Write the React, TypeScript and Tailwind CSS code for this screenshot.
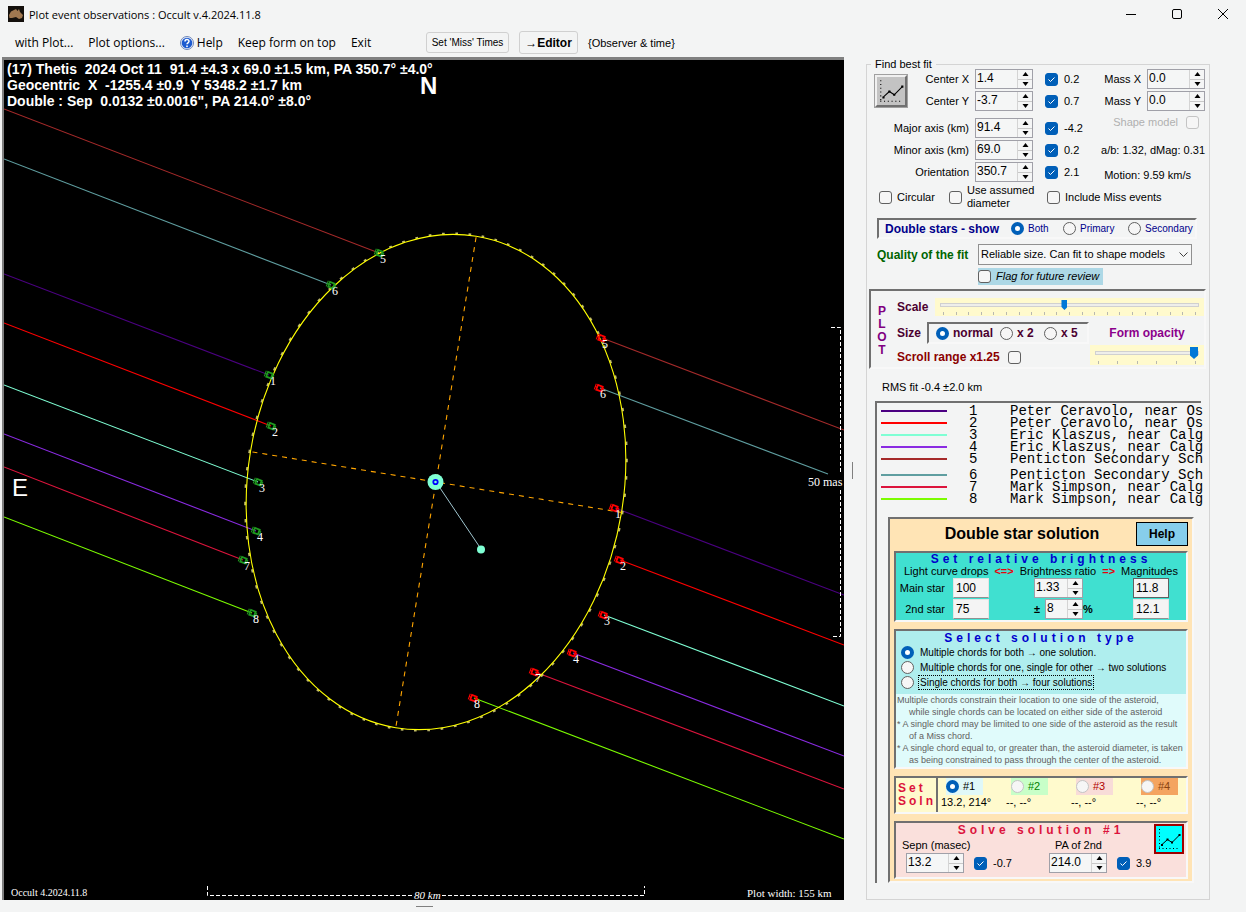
import type { ReactNode } from "react";
import clsx from "clsx";

interface Chord {
  id: number;
  observer: string;
  color: string;
  left: [number, number, number];
  right: [number, number, number, number];
}

// left: y at the plot edge, then the D event. right: the R event, then the far end.
const CHORDS: Chord[] = [
  { id: 1, observer: "Peter Ceravolo, near Os", color: "#4b0082", left: [274, 269, 375], right: [615, 508, 844, 595] },
  { id: 2, observer: "Peter Ceravolo, near Os", color: "#ff0000", left: [323, 271, 426], right: [620, 560, 844, 645] },
  { id: 3, observer: "Eric Klaszus, near Calg", color: "#7fffd4", left: [385, 258, 482], right: [604, 615, 844, 706] },
  { id: 4, observer: "Eric Klaszus, near Calg", color: "#8a2be2", left: [434, 256, 531], right: [573, 653, 844, 756] },
  { id: 5, observer: "Penticton Secondary Sch", color: "#a52a2a", left: [109, 379, 253], right: [602, 338, 844, 430] },
  { id: 6, observer: "Penticton Secondary Sch", color: "#5f9ea0", left: [159, 331, 285], right: [600, 388, 828, 474] },
  { id: 7, observer: "Mark Simpson, near Calg", color: "#dc143c", left: [467, 243, 560], right: [535, 672, 844, 789] },
  { id: 8, observer: "Mark Simpson, near Calg", color: "#7cfc00", left: [517, 252, 613], right: [474, 698, 844, 839] },
];

const CENTER = { x: 436, y: 482 };
const TILT = 9.3;

function ellipsePoint(deg: number, a: number, b: number) {
  const t = (deg * Math.PI) / 180;
  return [b * Math.cos(t), a * Math.sin(t)];
}

function EventMarker({ x, y, id, color }: { x: number; y: number; id: number; color: string }) {
  return (
    <g>
      <g transform={`translate(${x} ${y}) rotate(21)`} stroke={color} fill="none">
        <rect x="-2" y="-2.5" width="5" height="5" strokeWidth="1.8" />
        <path d="M-4 -3V3M-4 0H-2M4.5 -2V3" />
      </g>
      <text x={x + 1} y={y + 10} fill="#fff" fontSize="12" fontFamily="Liberation Serif, serif">
        {id}
      </text>
    </g>
  );
}

function Plot() {
  return (
    <svg viewBox="4 60 840 840" className="block w-full bg-black">
      {CHORDS.map((c) => (
        <g key={c.id} stroke={c.color} strokeWidth="1.1">
          <line x1="4" y1={c.left[0]} x2={c.left[1]} y2={c.left[2]} />
          <line x1={c.right[0]} y1={c.right[1]} x2={c.right[2]} y2={c.right[3]} />
        </g>
      ))}

      {/* Fitted ellipse with its axes */}
      <g transform={`translate(${CENTER.x} ${CENTER.y}) rotate(${TILT})`} fill="none">
        {Array.from({ length: 90 }, (_, i) => {
          const [x1, y1] = ellipsePoint(i * 4 - 0.4, 250, 189);
          const [x2, y2] = ellipsePoint(i * 4 + 0.4, 250, 189);
          return <line key={i} x1={x1} y1={y1} x2={x2} y2={y2} stroke="#bdb76b" strokeWidth="2" />;
        })}
        <ellipse rx="188" ry="249" stroke="#ffff00" strokeWidth="1.1" />
        <path d="M0 -248V248M-186 0H188" stroke="#ffa500" strokeDasharray="5 5" strokeWidth="1.1" />
      </g>

      {CHORDS.map((c) => (
        <g key={c.id}>
          <EventMarker x={c.left[1]} y={c.left[2]} id={c.id} color="#1f9a1f" />
          <EventMarker x={c.right[0] - 1} y={c.right[1]} id={c.id} color="#ff0000" />
        </g>
      ))}

      {/* The two stars */}
      <line x1="436" y1="482" x2="481" y2="549" stroke="#9fc5cf" />
      <circle cx="435.5" cy="482" r="8" fill="#7fffd4" />
      <circle cx="435.5" cy="482" r="2.2" fill="#7fffd4" stroke="#0000ff" strokeWidth="1.8" />
      <circle cx="481" cy="549.5" r="4" fill="#7fffd4" />

      {/* Scale bars */}
      <g stroke="#fff" strokeDasharray="4 2" fill="none">
        <path d="M831 327.5H840.5V474" />
        <path d="M840.5 490V636.5H831" />
        <path d="M207.5 886V895.5H412" />
        <path d="M442 895.5H644.5V886" />
      </g>
      <g fill="#fff" fontFamily="Liberation Serif, serif">
        <text x="808" y="486" fontSize="12">50 mas</text>
        <text x="414" y="899" fontSize="11" fontStyle="italic">80 km</text>
        <text x="11" y="896" fontSize="10">Occult 4.2024.11.8</text>
        <text x="747" y="897" fontSize="11">Plot width: 155 km</text>
      </g>

      <g fill="#fff" fontFamily="Liberation Sans, sans-serif" fontWeight="bold" fontSize="14">
        <text x="7" y="74" className="whitespace-pre">{"(17) Thetis  2024 Oct 11  91.4 ±4.3 x 69.0 ±1.5 km, PA 350.7° ±4.0°"}</text>
        <text x="7" y="90" className="whitespace-pre">{"Geocentric  X  -1255.4 ±0.9  Y 5348.2 ±1.7 km"}</text>
        <text x="7" y="106" className="whitespace-pre">{"Double : Sep  0.0132 ±0.0016\", PA 214.0° ±8.0°"}</text>
        <text x="420" y="94" fontSize="24">N</text>
        <text x="12" y="496" fontSize="24" fontWeight="normal">E</text>
      </g>
    </svg>
  );
}

function CheckBox({ label, checked, disabled }: { label: string; checked?: boolean; disabled?: boolean }) {
  return (
    <span className="grid size-[13px] shrink-0">
      <input
        type="checkbox"
        aria-label={label}
        defaultChecked={checked}
        disabled={disabled}
        className="peer col-start-1 row-start-1 size-[13px] appearance-none rounded-[3px] border border-[#606060] bg-[#f6f6f6] checked:border-[#005fb8] checked:bg-[#005fb8] disabled:border-[#c4c4c4]"
      />
      <svg viewBox="0 0 13 13" className="pointer-events-none invisible col-start-1 row-start-1 peer-checked:visible">
        <path d="M3.5 6.5 5.5 8.5 9.5 4.5" fill="none" stroke="#fff" />
      </svg>
    </span>
  );
}

function LabeledCheck({ label, children, className }: { label: string; children?: ReactNode; className?: string }) {
  return (
    <label className={clsx("flex items-center gap-[5px]", className)}>
      <CheckBox label={label} />
      <span>{children ?? label}</span>
    </label>
  );
}

interface RadioProps {
  name: string;
  label: string;
  checked?: boolean;
  disabled?: boolean;
  className?: string;
  labelClass?: string;
}

function Radio({ name, label, checked, disabled, className, labelClass }: RadioProps) {
  return (
    <label className={clsx("flex items-center gap-1 whitespace-nowrap", className)}>
      <input
        type="radio"
        name={name}
        defaultChecked={checked}
        disabled={disabled}
        className="size-[13px] shrink-0 appearance-none rounded-full border border-[#606060] bg-[#f6f6f6] checked:border-4 checked:border-[#005fb8] checked:bg-white disabled:border-[#c4c4c4]"
      />
      <span className={labelClass}>{label}</span>
    </label>
  );
}

function Spinner({ label, value, className }: { label: string; value: string; className?: string }) {
  return (
    <span className={clsx("flex h-5 shrink-0 border border-[#a0a0a8] bg-[#f5f6f6] text-black", className ?? "w-[58px]")}>
      <input aria-label={label} defaultValue={value} className="min-w-0 flex-1 bg-transparent pb-0.5 pl-px text-[12px] outline-none" />
      <span className="flex w-[15px] flex-col divide-y divide-[#c8c8c8] border-l border-[#d4d4d4]">
        <button aria-label={`${label} up`} className="grid flex-1 place-items-center">
          <svg viewBox="0 0 7 4" className="w-[7px]"><path d="M.5 4 3.5 0 6.5 4z" /></svg>
        </button>
        <button aria-label={`${label} down`} className="grid flex-1 place-items-center">
          <svg viewBox="0 0 7 4" className="w-[7px]"><path d="M.5 0H6.5L3.5 4z" /></svg>
        </button>
      </span>
    </span>
  );
}

function FitRow({ label, value, change }: { label: string; value: string; change: string }) {
  return (
    <div className="flex items-center">
      <span className="flex-1 pr-1.5 text-right">{label}</span>
      <Spinner label={label} value={value} />
      <span className="w-3" />
      <CheckBox label={`Fit ${label}`} checked />
      <span className="w-8 pl-1.5 whitespace-nowrap">{change}</span>
    </div>
  );
}

function FitIcon() {
  return (
    <svg viewBox="0 0 26 26" className="size-full" fill="none" stroke="#000">
      <path d="M3.5 3V24M3 22.5H24" strokeDasharray="1 2.5" />
      <path d="M6 18.5 11.5 13.5 16 16.5 23.5 9" />
      <path d="M5 18h2v2H5zM10.5 12.5h2v2h-2zM15 15.5h2v2h-2zM22.5 8h2v2h-2z" fill="#000" stroke="none" />
    </svg>
  );
}

function Ticks({ count }: { count: number }) {
  return (
    <span className="flex justify-between px-[3px]">
      {Array.from({ length: count }, (_, i) => (
        <span key={i} className="h-[3px] w-px bg-[#b8b8b0]" />
      ))}
    </span>
  );
}

function Slider({ label, value, ticks, small }: { label: string; value: number; ticks: number; small?: boolean }) {
  return (
    <div className="flex flex-col bg-[#fffacd] px-[5px] pt-0.5 pb-px">
      <input
        type="range"
        aria-label={label}
        defaultValue={value}
        className={clsx(
          "w-full appearance-none bg-transparent [&::-webkit-slider-runnable-track]:h-1 [&::-webkit-slider-runnable-track]:border [&::-webkit-slider-runnable-track]:border-[#d0d0d0] [&::-webkit-slider-runnable-track]:bg-[#eeeeea] [&::-webkit-slider-thumb]:appearance-none [&::-webkit-slider-thumb]:bg-[#0078d7] [&::-webkit-slider-thumb]:[clip-path:polygon(0_0,100%_0,100%_70%,50%_100%,0_70%)]",
          small
            ? "h-3 [&::-webkit-slider-thumb]:-mt-[5px] [&::-webkit-slider-thumb]:h-3 [&::-webkit-slider-thumb]:w-2"
            : "h-2.5 [&::-webkit-slider-thumb]:-mt-1 [&::-webkit-slider-thumb]:h-2.5 [&::-webkit-slider-thumb]:w-1.5",
        )}
      />
      <span className="h-0.5" />
      <Ticks count={ticks} />
    </div>
  );
}

// Win32 style sunken panel
function Sunken({ className, children }: { className?: string; children: ReactNode }) {
  return (
    <div className={clsx("border-2 border-t-[#707070] border-r-[#f8f8f8] border-b-[#f8f8f8] border-l-[#707070]", className)}>
      {children}
    </div>
  );
}

function HelpIcon() {
  return (
    <svg viewBox="0 0 14 14" className="size-3.5">
      <circle cx="7" cy="7" r="6.5" fill="#e8eefc" stroke="#6f87b8" />
      <circle cx="7" cy="7" r="5.3" fill="#1d5bd0" />
      <path d="M5 5.5C5 3 9 3 9 5.3 9 6.8 7 6.8 7 8.3" fill="none" stroke="#fff" strokeWidth="1.5" />
      <rect x="6.2" y="9.5" width="1.6" height="1.6" fill="#fff" />
    </svg>
  );
}

function TitleBar() {
  return (
    <header className="flex h-7 items-center pl-2 font-['Open_Sans','Noto_Sans',sans-serif]">
      <svg viewBox="0 0 16 16" className="mr-[5px] size-4">
        <rect width="16" height="16" fill="#14100c" />
        <path d="M1 9 3 5.5 6 4 8 3 9.5 5 11 3 12 6 15 9 14 12 11 13 8 11 4 12 1.5 12z" fill="#a07850" />
      </svg>
      <h1>Plot event observations : Occult v.4.2024.11.8</h1>
      <div className="ml-auto flex">
        {[
          ["Minimize", "M1 6.5H11"],
          ["Maximize", "M1.5 3Q1.5 1.5 3 1.5H9Q10.5 1.5 10.5 3V9Q10.5 10.5 9 10.5H3Q1.5 10.5 1.5 9Z"],
          ["Close", "M1 1 11 11M11 1 1 11"],
        ].map(([name, d]) => (
          <button key={name} aria-label={name} className="grid h-7 w-[46px] place-items-center">
            <svg viewBox="0 0 12 12" className="size-3" fill="none" stroke="#000"><path d={d} /></svg>
          </button>
        ))}
      </div>
    </header>
  );
}

function MenuBar() {
  return (
    <nav className="flex h-[29px] items-center pl-[15px]">
      <div className="flex w-[411px] items-center gap-[15px] font-['Open_Sans','Noto_Sans',sans-serif] text-xs whitespace-nowrap">
        <button>with Plot...</button>
        <button>Plot options...</button>
        <button className="flex items-center gap-[3px]"><HelpIcon />Help</button>
        <button>Keep form on top</button>
        <button>Exit</button>
      </div>
      <button className="h-[21px] w-[83px] rounded-[3px] border border-[#d0d0d0] text-[10px] whitespace-nowrap">Set 'Miss' Times</button>
      <button className="ml-2.5 h-[23px] w-[59px] rounded-[3px] border border-[#d0d0d0] text-xs font-bold whitespace-nowrap">→Editor</button>
      <span className="ml-2.5 pt-0.5">{"{Observer & time}"}</span>
    </nav>
  );
}

function FindBestFit() {
  return (
    <>
      <div className="flex pl-2">
        <div className="flex w-[215px] flex-col gap-[7px]">
          <div className="flex">
            <button aria-label="Fit" className="mt-1.5 size-8 shrink-0 border-2 border-t-[#f0f0f0] border-r-[#707070] border-b-[#707070] border-l-[#f0f0f0] bg-[#c3c3c3] outline outline-[#a0a0a0]">
              <FitIcon />
            </button>
            <div className="flex flex-1 flex-col gap-0.5">
              <FitRow label="Center X" value="1.4" change="0.2" />
              <FitRow label="Center Y" value="-3.7" change="0.7" />
            </div>
          </div>
          <div className="flex flex-col gap-0.5">
            <FitRow label="Major axis (km)" value="91.4" change="-4.2" />
            <FitRow label="Minor axis (km)" value="69.0" change="0.2" />
            <FitRow label="Orientation" value="350.7" change="2.1" />
          </div>
        </div>
        <div className="flex flex-1 flex-col items-end gap-0.5 pr-1">
          {["Mass X", "Mass Y"].map((m) => (
            <div key={m} className="flex items-center gap-1.5">
              <span>{m}</span>
              <Spinner label={m} value="0.0" />
            </div>
          ))}
          <label className="mt-0.5 flex items-center gap-2 pr-1.5 text-[#b0b0b0]">
            Shape model
            <CheckBox label="Shape model" disabled />
          </label>
          <span className="mt-[11px] whitespace-nowrap">a/b: 1.32, dMag: 0.31</span>
          <span className="mt-2 pr-3.5 whitespace-nowrap">Motion: 9.59 km/s</span>
        </div>
      </div>

      <div className="flex h-7 items-center pl-3">
        <LabeledCheck label="Circular" className="w-[70px]" />
        <LabeledCheck label="Use assumed diameter" className="w-[98px] leading-[13px]">
          Use assumed<br />diameter
        </LabeledCheck>
        <LabeledCheck label="Include Miss events" />
      </div>

      <Sunken className="mt-[7px] mr-3 ml-2.5 flex h-[21px] items-center pl-1.5 text-[10px] text-[#00008b]">
        <span className="w-[126px] text-xs font-bold whitespace-nowrap">Double stars - show</span>
        <Radio name="show" label="Both" checked className="w-[52px]" />
        <Radio name="show" label="Primary" className="w-[65px]" />
        <Radio name="show" label="Secondary" />
      </Sunken>

      <div className="mt-[5px] flex pl-2.5">
        <label htmlFor="quality" className="w-[101px] pt-[3px] text-xs font-bold whitespace-nowrap text-[#006400]">Quality of the fit</label>
        <div className="flex flex-col items-start gap-[3px]">
          <div className="grid">
            <select id="quality" className="col-start-1 row-start-1 h-[21px] w-[214px] appearance-none border border-[#909090] bg-[#f6f7f7] pl-0.5 text-[11px]">
              <option>Reliable size. Can fit to shape models</option>
            </select>
            <svg viewBox="0 0 9 6" className="pointer-events-none col-start-1 row-start-1 mr-1 w-[9px] self-center justify-self-end" fill="none" stroke="#404040">
              <path d="M.5 .5 4.5 4.5 8.5 .5" />
            </svg>
          </div>
          <LabeledCheck label="Flag for future review" className="h-[17px] w-[125px] bg-[#add8e6] whitespace-nowrap italic" />
        </div>
      </div>
    </>
  );
}

function PlotControls() {
  return (
    <Sunken className="mt-1 mr-[3px] ml-0.5 flex pb-0.5 text-xs font-bold text-[#4b0030]">
      <div className="flex w-[26px] flex-col items-center pt-3.5 pr-1 leading-[13px] text-[#800080]">
        {["P", "L", "O", "T"].map((c) => <span key={c}>{c}</span>)}
      </div>
      <div className="flex min-w-0 flex-1 flex-col">
        <div className="flex items-center pt-[7px]">
          <span className="w-[38px]">Scale</span>
          <div className="min-w-0 flex-1"><Slider label="Scale" value={48} ticks={21} /></div>
        </div>
        <div className="flex pt-1.5">
          <div className="flex w-[193px] flex-col gap-[5px]">
            <div className="flex items-center">
              <span className="w-[30px]">Size</span>
              <Sunken className="flex h-[22px] w-[162px] items-center pl-[7px]">
                <Radio name="size" label="normal" checked className="w-16" />
                <Radio name="size" label="x 2" className="w-11" />
                <Radio name="size" label="x 5" />
              </Sunken>
            </div>
            <label className="flex items-center gap-2 whitespace-nowrap text-[#8b0000]">
              Scroll range x1.25
              <CheckBox label="Scroll range x1.25" />
            </label>
          </div>
          <div className="flex min-w-0 flex-1 flex-col">
            <span className="h-[23px] pt-[3px] text-center whitespace-nowrap text-[#8b008b]">Form opacity</span>
            <Slider label="Form opacity" value={100} ticks={6} small />
          </div>
        </div>
      </div>
    </Sunken>
  );
}

function StarInput({ label, value, framed }: { label: string; value: string; framed?: boolean }) {
  return (
    <input
      aria-label={label}
      defaultValue={value}
      className={clsx("h-5 w-9 border bg-[#f4f4f4] pl-0.5 text-xs", framed ? "border-[#606060]" : "border-[#e4e4e4] border-b-[#909090]")}
    />
  );
}

function RelativeBrightness() {
  return (
    <Sunken className="bg-[#40e0d0] pb-px">
      <h3 className="text-center text-xs leading-3 font-bold tracking-[4px] whitespace-nowrap text-[#0000cd]">Set relative brightness</h3>
      <div className="flex justify-between px-2 pb-px leading-3 whitespace-nowrap">
        <span>Light curve drops</span>
        <b className="text-red-600">&lt;=&gt;</b>
        <span>Brightness ratio</span>
        <b className="text-red-600">=&gt;</b>
        <span>Magnitudes</span>
      </div>
      <div className="grid grid-cols-[49px_36px_29px_60px_23px_36px] items-center gap-x-2 gap-y-px">
        <span className="text-right whitespace-nowrap">Main star</span>
        <StarInput label="Main star drop" value="100" />
        <span />
        <Spinner label="Brightness ratio" value="1.33" className="w-[49px]" />
        <span />
        <StarInput label="Main star magnitude" value="11.8" framed />
        <span className="text-right whitespace-nowrap">2nd star</span>
        <StarInput label="2nd star drop" value="75" />
        <span />
        <span className="flex items-center">
          <b className="w-[11px]">±</b>
          <Spinner label="Ratio uncertainty" value="8" className="w-[38px]" />
          <b>%</b>
        </span>
        <span />
        <StarInput label="2nd star magnitude" value="12.1" />
      </div>
    </Sunken>
  );
}

const NOTES = [
  ["Multiple chords constrain their location to one side of the asteroid,", "while single chords can be located on either side of the asteroid"],
  ["* A single chord may be limited to one side of the asteroid as the result", "of a Miss chord."],
  ["* A single chord equal to, or greater than, the asteroid diameter, is taken", "as being constrained to pass through the center of the asteroid."],
];

function SolutionType() {
  return (
    <Sunken className="bg-[#afeeee]">
      <h3 className="text-center text-xs leading-[14px] font-bold tracking-[4px] whitespace-nowrap text-[#0000cd]">Select solution type</h3>
      <div className="flex h-[49px] flex-col pl-[5px] text-[10px] leading-[15px]">
        <Radio name="type" label="Multiple chords for both → one solution." checked labelClass="pl-0.5" />
        <Radio name="type" label="Multiple chords for one, single for other → two solutions" labelClass="pl-0.5" />
        <Radio name="type" label="Single chords for both → four solutions" labelClass="border border-dotted border-black px-px leading-[13px]" />
      </div>
      <div className="bg-[#e0fbfb] pb-px pl-px text-[9px] leading-3 whitespace-nowrap text-[#606060]">
        {NOTES.map(([first, second]) => (
          <p key={first}>
            <span className="block">{first}</span>
            <span className="block pl-3">{second}</span>
          </p>
        ))}
      </div>
    </Sunken>
  );
}

const SOLUTIONS = [
  { label: "#1", result: "13.2, 214°", style: "bg-[#e0f8f8] text-black" },
  { label: "#2", result: "--, --°", style: "bg-[#c8ffc8] text-[#008000]" },
  { label: "#3", result: "--, --°", style: "bg-[#f8dcd8] text-[#b00000]" },
  { label: "#4", result: "--, --°", style: "bg-[#f4a460] text-[#8b4513]" },
];

function SetSolution() {
  return (
    <Sunken className="flex bg-[#fffacd]">
      <h3 className="w-[43px] border-r-2 border-[#707070] pt-1 pl-0.5 text-xs leading-[13px] font-bold tracking-[3px] text-[#dc143c]">
        Set<br />Soln
      </h3>
      <div className="flex flex-1">
        {SOLUTIONS.map((s) => (
          <div key={s.label} className="flex w-[65px] flex-col pl-[3px]">
            <Radio
              name="solution"
              label={s.label}
              checked={s.label === "#1"}
              disabled={s.label !== "#1"}
              className={clsx("ml-[5px] h-[17px] w-[37px]", s.style)}
            />
            <span className="h-[17px] whitespace-nowrap">{s.result}</span>
          </div>
        ))}
      </div>
    </Sunken>
  );
}

function SolveField({ label, value, change, labelClass }: { label: string; value: string; change: string; labelClass: string }) {
  return (
    <div className="flex w-[147px] flex-col">
      <span className={clsx("leading-4", labelClass)}>{label}</span>
      <span className="flex items-center pl-1.5">
        <Spinner label={label} value={value} />
        <span className="w-2.5" />
        <CheckBox label={`Solve ${label}`} checked />
        <span className="pl-1.5">{change}</span>
      </span>
    </div>
  );
}

function SolveSolution() {
  return (
    <Sunken className="relative h-[58px] bg-[#fae0dc]">
      <h3 className="text-center text-xs leading-[14px] font-bold tracking-[4px] text-[#dc143c]">Solve solution #1</h3>
      <div className="flex pl-1">
        <SolveField label="Sepn (masec)" value="13.2" change="-0.7" labelClass="pl-0.5" />
        <SolveField label="PA of 2nd" value="214.0" change="3.9" labelClass="pl-3" />
      </div>
      <button aria-label="Solve" className="absolute top-px right-0.5 size-[30px] border-2 border-[#a00000] bg-[#00ffff]">
        <FitIcon />
      </button>
    </Sunken>
  );
}

function DoubleStar() {
  return (
    <Sunken className="mt-3 mr-[7px] ml-[11px] flex flex-col gap-[7px] bg-[#ffe4b5] px-1 pb-0.5">
      <div className="-mb-[3px] flex h-7 items-center pt-0.5">
        <h2 className="flex-1 pl-5 text-center text-base font-bold whitespace-nowrap">Double star solution</h2>
        <button className="ml-1.5 h-6 w-[52px] border border-black bg-[#87ceeb] text-xs font-bold">Help</button>
      </div>
      <RelativeBrightness />
      <SolutionType />
      <SetSolution />
      <SolveSolution />
    </Sunken>
  );
}

export default function App() {
  return (
    <div className="flex min-h-screen flex-col bg-[#f3f4f4] font-['Liberation_Sans',Arial,sans-serif] text-[11px] leading-[15px] text-black">
      <TitleBar />
      <MenuBar />
      <main className="flex pl-0.5">
        <section className="min-w-0 flex-1 border-t-[3px] border-l-2 border-[#808080]">
          <Plot />
        </section>
        <div className="flex w-[22px] items-center pb-4 pl-2">
          <span className="h-[17px] w-px bg-[#808080]" />
        </div>
        <fieldset className="mt-0.5 mr-9 w-[344px] min-w-0 shrink-0 border border-[#d4d4d4]">
          <legend className="ml-1 px-1 leading-[10px]">Find best fit</legend>
          <FindBestFit />
          <PlotControls />
          <p className="mt-[11px] ml-[15px]">RMS fit -0.4 ±2.0 km</p>
          <Sunken className="mt-1.5 mr-2 ml-2 border-r-0 border-b-0 pt-0.5">
            <ul className="font-['Liberation_Mono','Courier_New',monospace] text-sm leading-3">
              {CHORDS.map((c) => (
                <li key={c.id} className={clsx("flex h-3 items-center pl-1 whitespace-pre", c.id === 5 && "mb-1")}>
                  <span className="h-0.5 w-[66px] shrink-0" style={{ backgroundColor: c.color }} />
                  <span className="w-[63px] shrink-0 pl-[22px]">{c.id}</span>
                  <span>{c.observer}</span>
                </li>
              ))}
            </ul>
            <DoubleStar />
          </Sunken>
        </fieldset>
      </main>
      <footer className="flex h-3 items-center pl-[416px]">
        <span className="h-px w-[17px] bg-[#808080]" />
      </footer>
    </div>
  );
}
